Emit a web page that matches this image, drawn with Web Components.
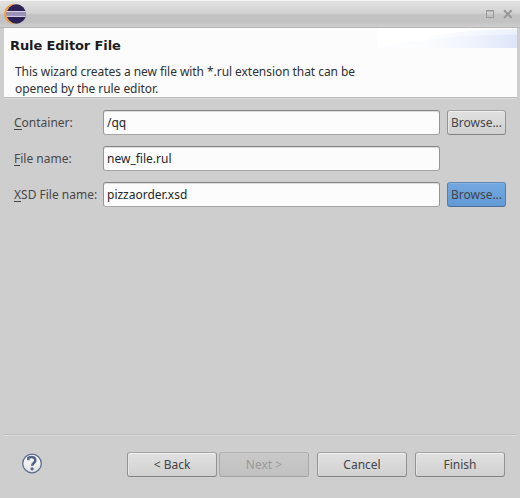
<!DOCTYPE html>
<html lang="en"><head><meta charset="utf-8"><title>Rule Editor File</title>
<style>
body{margin:0;width:520px;height:498px;overflow:hidden;background:#cecece;font:12px/17px "Noto Sans","Open Sans",sans-serif;color:#2f3134}
</style></head><body>
<wizard-window></wizard-window>
<script>
const define=(name,html)=>customElements.define(name,class extends HTMLElement{
  constructor(){super();const t=document.createElement('template');t.innerHTML=html;this.attachShadow({mode:'open'}).append(t.content.cloneNode(true));}
});

define('title-bar',`<style>
:host{display:flex;box-sizing:border-box;height:28px;padding:0 7px 0 4px;align-items:center;background:linear-gradient(#f4f4f4 0 1px,#e2e2e2 1px,#d2d2d2 13px,#c2c2c2 15px,#c3c3c3 22px,#cecece 27px,#b6b6b6 27px)}
.controls{margin-left:auto}svg{display:block}
</style>
<svg width="23" height="28" viewBox="0 0 23 28">
<circle cx="10.3" cy="14" r="10.2" fill="#f69a2c"/>
<circle cx="12" cy="14" r="9.9" fill="#cfc9c7"/>
<circle cx="12.3" cy="14" r="9.7" fill="#2c2255"/>
<path d="M2.8 11H21.8L22 14L21.5 17H3.1L2.6 14Z" fill="#9c91b8"/>
<path d="M3 11.5H21.6M3 16.4H21.6" stroke="#d9d4e2"/>
</svg>
<svg class="controls" width="29" height="28" viewBox="0 0 29 28" fill="none" stroke="#989898">
<path d="M2.5 10.5H9.5V17.5H2.5ZM2 11H10"/>
<path d="M20.800 11L27 17.200M27 11L20.800 17.200" stroke-width="2" stroke-linecap="square"/>
</svg>`);

define('wizard-header',`<style>
:host{display:block;position:relative;box-sizing:border-box;height:71px;margin:0 3px 0 4px;padding:9px 6px 0;background:linear-gradient(#fcfcfc 69px,#b9b9b9 69px 70px,#dcdcdc 70px)}
h1{margin:0;font:bold 13px/17px "DejaVu Sans",sans-serif;color:#1c1c1c;position:relative;letter-spacing:-.1px}
p{margin:9px 0 0 5px;position:relative;letter-spacing:-.057px}
svg{position:absolute;right:0;top:0}
</style>
<svg width="140" height="20" viewBox="0 0 140 20"><defs>
<linearGradient id="a"><stop offset=".05" stop-color="#fdfdff"/><stop offset=".35" stop-color="#fbfcff"/><stop offset=".65" stop-color="#f0f4fc"/><stop offset="1" stop-color="#dde5f8"/></linearGradient>
<linearGradient id="b"><stop offset=".3" stop-color="#fff"/><stop offset="1" stop-color="#ebf1fc"/></linearGradient></defs>
<path d="M0 0H140V20H0Z" fill="#fff"/><path d="M0 20Q60 2 140 1V20Z" fill="url(#b)"/><path d="M0 20Q60 7 140 6.500V20Z" fill="url(#a)"/></svg>
<h1><slot name="title"></slot></h1><p><slot></slot></p>`);

define('text-field',`<style>
:host{display:block;box-sizing:border-box;height:25px;padding:3px 3px 0;border:1px solid;border-color:#858585 #959595 #a5a5a5;border-radius:3px;background:#fcfcfc;box-shadow:inset 0 1px #dedede;color:#262626}
</style><slot></slot>`);

define('push-button',`<style>
:host{display:block;box-sizing:border-box;height:25px;border:1px solid;border-color:#a3a3a3 #929292 #838383;border-radius:3px;background:linear-gradient(#e1e1e1,#d0d0d0);box-shadow:inset 0 1px #f0f0f0,inset 1px 0 #e5e5e5;text-align:center;line-height:23px;color:#434548;white-space:nowrap}
:host([active]){background:linear-gradient(#73a8e1,#629ad6);border-color:#5f8ab7 #587fa9 #4f7093;box-shadow:inset 0 1px #81b1e5}
:host([disabled]){background:linear-gradient(#c9c9c9,#c1c1c1);border-color:#b1b1b1 #aaa #a2a2a2;box-shadow:none;color:#999}
</style><slot></slot>`);

define('field-row',`<style>
:host{display:grid;grid-template-columns:89px 337px 7px 59px;height:25px;align-items:center;color:#484848}
.label{white-space:nowrap}
::slotted(push-button){grid-column:4}
</style><span class="label"><slot name="label"></slot></span><slot></slot>`);

define('help-button',`<style>:host{display:block;width:22px;height:22px}svg{display:block}</style>
<svg width="22" height="22" viewBox="0 0 22 22"><defs><linearGradient id="g" x2="0" y2="1"><stop stop-color="#fff"/><stop offset="1" stop-color="#e2e2e2"/></linearGradient></defs>
<circle cx="11" cy="10.500" r="9.300" fill="url(#g)" stroke="#5c6e90" stroke-width="1.300"/>
<path d="M7.300 7.300V5C10.200 3.300 14.400 3.900 14.400 7.200C14.400 9.900 11.200 10.100 11.200 12.800" fill="none" stroke="#536587" stroke-width="2.500"/>
<circle cx="11.100" cy="15.800" r="1.600" fill="#536587"/></svg>`);

define('wizard-window',`<style>
:host{display:flex;flex-direction:column;height:498px}
.form{display:flex;flex-direction:column;gap:11px;padding:11px 14px 0;flex:1}
u{text-decoration:none;box-shadow:inset 0 -1px #444;display:inline-block;height:16px;line-height:17px;vertical-align:top}
footer{display:flex;box-sizing:border-box;height:64px;margin:0 3px 0 4px;padding:17px 12px 0 17px;border-top:1px solid #bebebe;box-shadow:inset 0 1px #dcdcdc}
help-button{margin-top:1px}
nav{display:flex;margin-left:auto}
nav push-button{width:90px}
.next{margin-left:2px}.gap{margin-left:8px}
</style>
<title-bar></title-bar>
<wizard-header><span slot="title">Rule Editor File</span>This wizard creates a new file with *.rul extension that can be<br>opened by the rule editor.</wizard-header>
<div class="form">
<field-row><span slot="label"><u>C</u>ontainer:</span><text-field>/qq</text-field><push-button>Browse...</push-button></field-row>
<field-row><span slot="label"><u>F</u>ile name:</span><text-field>new_file.rul</text-field></field-row>
<field-row><span slot="label"><u>X</u>SD File name:</span><text-field>pizzaorder.xsd</text-field><push-button active>Browse...</push-button></field-row>
</div>
<footer><help-button></help-button><nav><push-button>&lt; Back</push-button><push-button class="next" disabled>Next &gt;</push-button><push-button class="gap">Cancel</push-button><push-button class="gap">Finish</push-button></nav></footer>`);
</script></body></html>
